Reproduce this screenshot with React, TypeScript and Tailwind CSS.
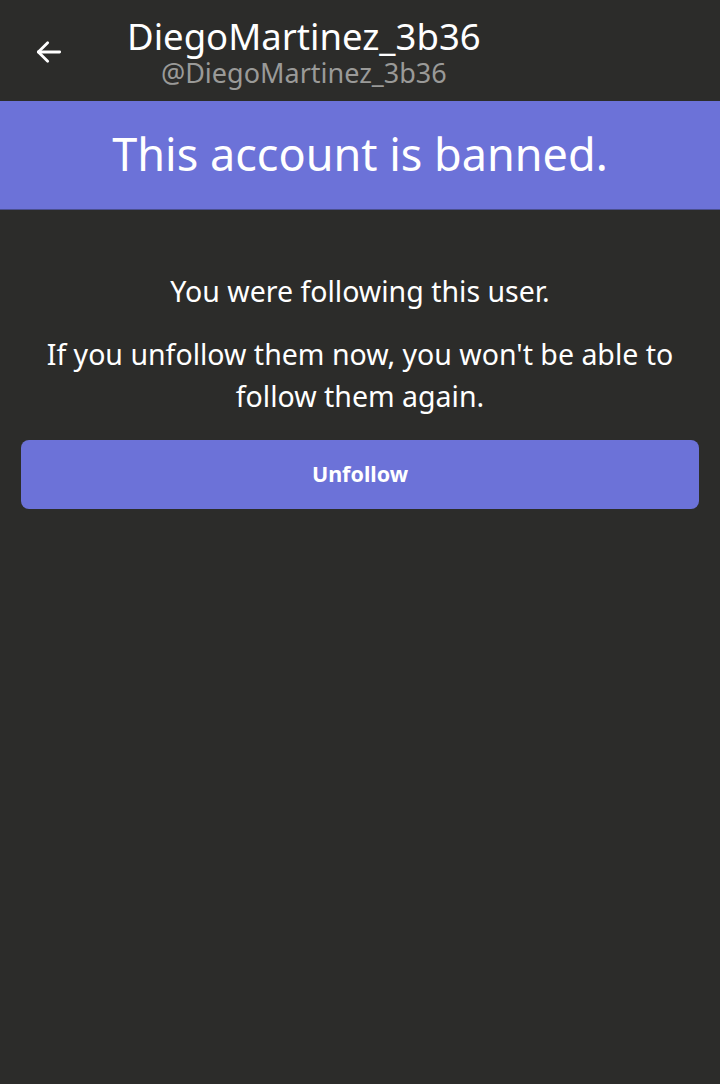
import React from "react";

export default function App() {
  return (
    <div className="w-[720px] h-[1084px] bg-[#2c2c2a] text-white" style={{ fontFamily: "'Noto Sans', sans-serif" }}>
      <div className="h-[101px] flex items-start">
        <div className="w-[98px] h-[101px] flex items-center justify-center">
          <svg width="32" height="32" viewBox="0 0 24 24" fill="none" stroke="white" strokeWidth="2.1" strokeLinecap="round" strokeLinejoin="round" className="mt-[3px]">
            <path d="M20 12H4" />
            <path d="M11 5l-7 7 7 7" />
          </svg>
        </div>
        <div className="flex flex-col items-center pt-[15px] ml-[29px]">
          <div className="text-[36.5px] leading-[42px] text-white">DiegoMartinez_3b36</div>
          <div className="text-[27px] leading-[30px] text-[#9a9a98] mt-[1px]">@DiegoMartinez_3b36</div>
        </div>
      </div>
      <div className="h-[109px] bg-[#6c72d8] border-b border-[#4a4f8f] flex items-center justify-center">
        <div className="text-[45px] text-white leading-none -mt-[4px]">This account is banned.</div>
      </div>
      <div className="px-[21px] pt-[63px] flex flex-col items-center">
        <div className="text-[28.5px] leading-[36px] text-center">You were following this user.</div>
        <div className="text-[28.5px] leading-[42px] text-center mt-[24px] w-[650px]">
          If you unfollow them now, you won't be able to follow them again.
        </div>
        <button className="mt-[23px] w-full h-[69px] rounded-[8px] bg-[#6c72d8] text-[21.5px] font-bold text-white">
          Unfollow
        </button>
      </div>
    </div>
  );
}
